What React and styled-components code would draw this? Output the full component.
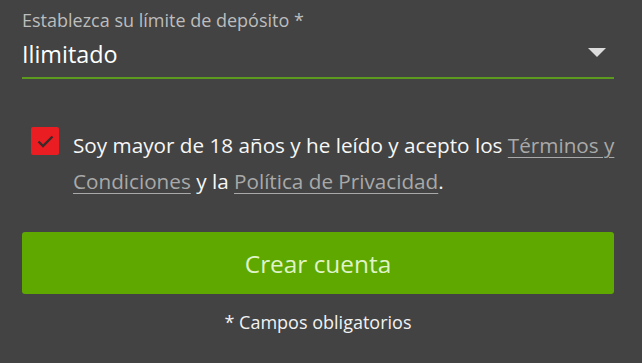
import React, { useState } from 'react';
import styled, { createGlobalStyle } from 'styled-components';

const GlobalStyle = createGlobalStyle`
  html, body {
    margin: 0;
    padding: 0;
    background: #434343;
  }
  body {
    font-family: "Open Sans", Lato, Arial, sans-serif;
  }
`;

const Form = styled.form`
  width: 642px;
  height: 363px;
  box-sizing: border-box;
  padding: 9px 28px 0 22px;
  background: #434343;
  color: #fff;
`;

const Field = styled.div`
  display: flex;
  flex-direction: column;
`;

const Label = styled.label`
  font-size: 18px;
  line-height: 22px;
  color: #bdbdbd;
`;

const SelectRow = styled.div`
  display: flex;
  align-items: center;
  justify-content: space-between;
  height: 46px;
  border-bottom: 2px solid #5b9a1d;
`;

const Value = styled.span`
  font-size: 23.4px;
  color: #fff;
`;

const Caret = styled.svg`
  width: 18px;
  height: 9px;
  margin-right: 8px;
  margin-bottom: 4px;
`;

const Consent = styled.div`
  display: flex;
  align-items: flex-start;
  gap: 14px;
  margin: 48px -4px 0 9px;
`;

const Box = styled.span`
  flex: none;
  display: flex;
  align-items: center;
  justify-content: center;
  width: 28px;
  height: 28px;
  border-radius: 2px;
  background: ${p => (p.checked ? '#ea1d22' : 'transparent')};
  cursor: pointer;
`;

const ConsentText = styled.p`
  margin: 0;
  font-size: 20.7px;
  line-height: 36px;
  color: #f7f7f7;
`;

const TextLink = styled.a`
  color: #a9a9a9;
  text-decoration: underline;
  text-underline-offset: 4px;
  text-decoration-thickness: 1px;
`;

const SubmitButton = styled.button`
  display: block;
  width: 100%;
  height: 62px;
  margin-top: 33px;
  border: 0;
  border-radius: 3px;
  background: #5fa800;
  color: #dff3c9;
  font-family: inherit;
  font-size: 24.4px;
  cursor: pointer;
`;

const Note = styled.p`
  margin: 16px 0 0;
  text-align: center;
  font-size: 18px;
  line-height: 24px;
  color: #f2f2f2;
`;

export default function App() {
  const [checked, setChecked] = useState(true);

  return (
    <>
      <GlobalStyle />
      <Form onSubmit={e => e.preventDefault()}>
        <Field>
          <Label>Establezca su límite de depósito *</Label>
          <SelectRow>
            <Value>Ilimitado</Value>
            <Caret viewBox="0 0 18 9">
              <path d="M0 0 H18 L9 9 Z" fill="#dcdcdc" />
            </Caret>
          </SelectRow>
        </Field>

        <Consent>
          <Box checked={checked} onClick={() => setChecked(!checked)}>
            {checked && (
              <svg width="17" height="13" viewBox="0 0 17 13">
                <path d="M1.5 6.5 L6 11 L15.5 1.5" fill="none" stroke="#3a2a2a" strokeWidth="2.4" />
              </svg>
            )}
          </Box>
          <ConsentText>
            Soy mayor de 18 años y he leído y acepto los <TextLink href="#">Términos y Condiciones</TextLink> y la{' '}
            <TextLink href="#">Política de Privacidad</TextLink>.
          </ConsentText>
        </Consent>

        <SubmitButton type="submit">Crear cuenta</SubmitButton>
        <Note>* Campos obligatorios</Note>
      </Form>
    </>
  );
}
